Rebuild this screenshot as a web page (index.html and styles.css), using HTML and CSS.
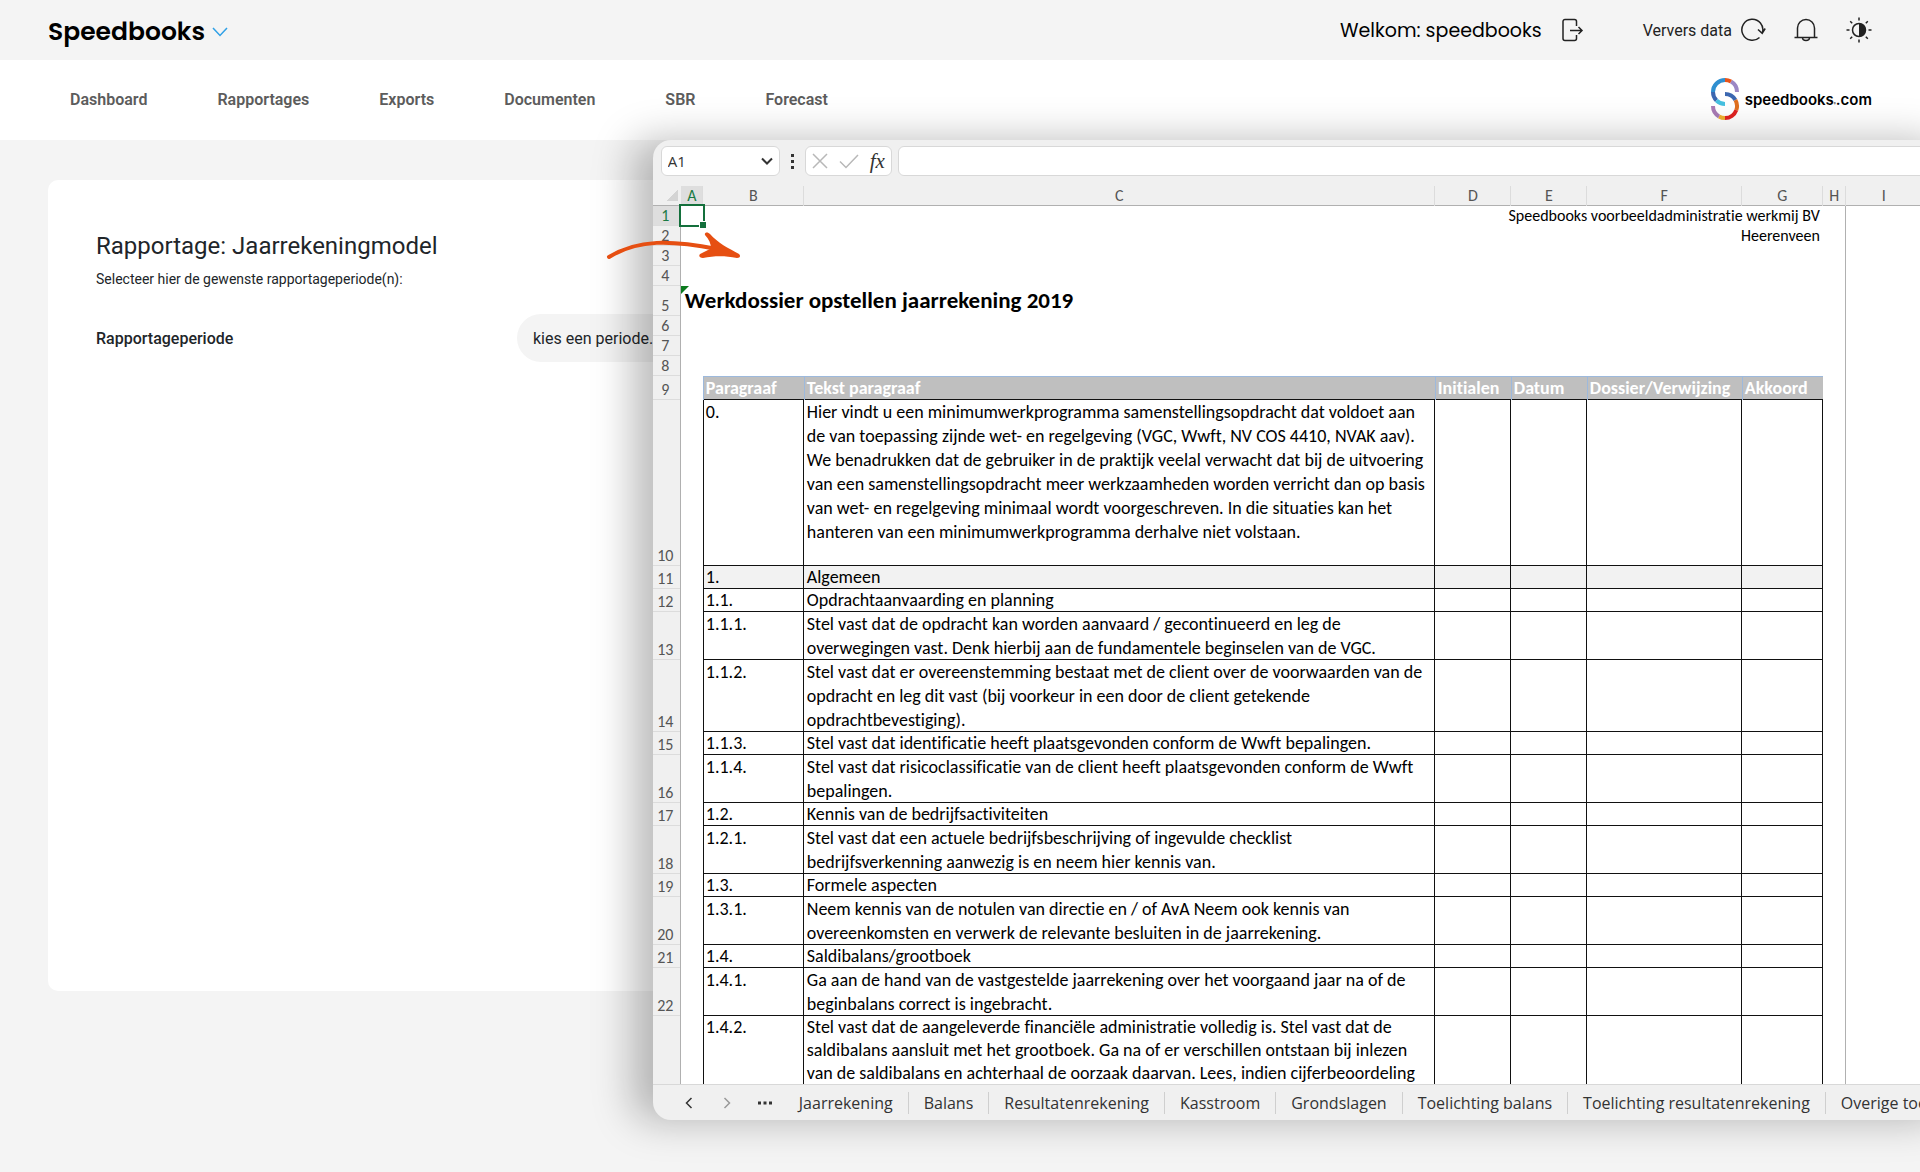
FILE: index.html
```html
<!DOCTYPE html>
<html lang="nl">
<head>
<meta charset="utf-8">
<meta name="viewport" content="width=device-width, initial-scale=1">
<title>Speedbooks - Rapportage</title>
<link rel="stylesheet" href="styles.css">
</head>
<body>
<div class="page">
  <header class="topbar">
    <button class="brand" type="button">Speedbooks
      <svg class="brand-chevron" viewBox="0 0 16 10" aria-hidden="true"><path d="M1 1l7 7.500 7-7.500"/></svg>
    </button>
    <div class="topbar-right">
      <span class="welcome">Welkom: speedbooks</span>
      <button class="icon-button logout" type="button" aria-label="Uitloggen">
        <svg width="22" height="24" viewBox="0 0 22 24"><path d="M14.500 8V3.500a2 2 0 0 0-2-2h-9.500a2 2 0 0 0-2 2v17a2 2 0 0 0 2 2h9.500a2 2 0 0 0 2-2V17M8 12.500h12M16.500 9l3.500 3.500-3.500 3.500"/></svg>
      </button>
      <button class="refresh" type="button">Ververs data
        <svg width="26" height="26" viewBox="0 0 26 26"><path d="M19.500 20.500A10.500 10.500 0 1 1 22.500 15.500M18 12.500l4.200 3.800 3-4.800"/></svg>
      </button>
      <button class="icon-button" type="button" aria-label="Meldingen">
        <svg width="26" height="26" viewBox="0 0 26 26"><path d="M1.500 20.500h23M4.500 20.500v-9.500a8.500 8.500 0 0 1 17 0v9.500M9.500 20.500a3.500 3 0 0 0 7 0"/></svg>
      </button>
      <button class="icon-button" type="button" aria-label="Thema wisselen">
        <svg width="26" height="26" viewBox="0 0 26 26"><circle cx="13" cy="13" r="6.500"/><path class="solid" d="M13 6.500a6.500 6.500 0 0 1 0 13z"/><path d="M13 .5v3M13 22.500v3M.5 13h3M22.500 13h3M4.200 4.200l2 2M19.800 19.800l2 2M21.800 4.200l-2 2M6.200 19.800l-2 2"/></svg>
      </button>
    </div>
  </header>

  <nav class="mainnav" aria-label="Hoofdmenu">
    <ul class="menu">
      <li><a href="#">Dashboard</a></li>
      <li><a href="#">Rapportages</a></li>
      <li><a href="#">Exports</a></li>
      <li><a href="#">Documenten</a></li>
      <li><a href="#">SBR</a></li>
      <li><a href="#">Forecast</a></li>
    </ul>
    <a class="logo" href="#">
      <svg width="30" height="44" viewBox="0 0 30 44" aria-hidden="true">
        <path stroke="#9b87c4" d="M27 15A12 12 0 0 0 21 4.600"/>
        <path stroke="#e8541a" d="M21 4.600A12 12 0 0 0 15 3"/>
        <path stroke="#2f8fd0" d="M15 3A12 12 0 0 0 3 15"/>
        <path stroke="#3b67b0" d="M3 15A12 12 0 0 0 6.500 23.500"/>
        <path stroke="#45c0e0" d="M6.500 23.500A12 12 0 0 0 15 27"/>
        <path stroke="#3b67b0" d="M15 17A12 12 0 0 1 25.400 23"/>
        <path stroke="#e07020" d="M25.400 23A12 12 0 0 1 26.300 33.100"/>
        <path stroke="#e02222" d="M26.300 33.100A12 12 0 0 1 15 41"/>
        <path stroke="#f0b030" d="M15 41A12 12 0 0 1 9 39.400"/>
        <path stroke="#a87bb5" d="M9 39.400A12 12 0 0 1 3 29"/>
      </svg>
      <span>speedbooks<small>®</small>.com</span>
    </a>
  </nav>

  <main class="card">
    <h1>Rapportage: Jaarrekeningmodel</h1>
    <p class="hint">Selecteer hier de gewenste rapportageperiode(n):</p>
    <div class="field">
      <label for="periode">Rapportageperiode</label>
      <select id="periode"><option>kies een periode...</option></select>
    </div>
  </main>

  <section class="workbook" aria-label="Werkdossier">
    <div class="formula-bar">
      <div class="name-box">
        <input type="text" value="A1" aria-label="Naamvak">
        <svg width="12" height="8" viewBox="0 0 12 8" aria-hidden="true"><path d="M1 1.500l5 5 5-5"/></svg>
      </div>
      <span class="dots" aria-hidden="true"><i></i><i></i><i></i></span>
      <div class="formula-tools">
        <button type="button" aria-label="Annuleren"><svg width="16" height="16" viewBox="0 0 16 16"><path d="M1 1l14 14M15 1L1 15"/></svg></button>
        <button type="button" aria-label="Invoeren"><svg width="20" height="16" viewBox="0 0 20 16"><path d="M1 8.500l6 6L19 2"/></svg></button>
        <button class="fx" type="button">fx</button>
      </div>
      <input class="formula" type="text" aria-label="Formule">
    </div>

    <div class="grid-view">
      <table class="grid">
        <colgroup><col class="c-row"><col class="c-a"><col class="c-b"><col class="c-c"><col class="c-d"><col class="c-d"><col class="c-f"><col class="c-g"><col class="c-h"><col class="c-d"><col></colgroup>
        <thead>
          <tr><th class="corner"></th><th class="active">A</th><th>B</th><th>C</th><th>D</th><th>E</th><th>F</th><th>G</th><th>H</th><th>I</th><th></th></tr>
        </thead>
        <tbody>
          <tr><th class="active">1</th><td class="selected"></td><td></td><td></td><td class="right" colspan="4">Speedbooks voorbeeldadministratie werkmij BV</td><td class="edge"></td><td></td></tr>
          <tr><th>2</th><td></td><td></td><td></td><td class="right" colspan="4">Heerenveen</td><td class="edge"></td><td></td></tr>
          <tr><th>3</th><td colspan="7"></td><td class="edge"></td><td></td></tr>
          <tr><th>4</th><td colspan="7"></td><td class="edge"></td><td></td></tr>
          <tr class="title-row"><th>5</th><td class="flagged" colspan="7">Werkdossier opstellen jaarrekening 2019</td><td class="edge"></td><td></td></tr>
          <tr><th>6</th><td colspan="7"></td><td class="edge"></td><td></td></tr>
          <tr><th>7</th><td colspan="7"></td><td class="edge"></td><td></td></tr>
          <tr><th>8</th><td colspan="7"></td><td class="edge"></td><td></td></tr>
          <tr class="head"><th>9</th><td></td><td>Paragraaf</td><td>Tekst paragraaf</td><td>Initialen</td><td>Datum</td><td>Dossier/Verwijzing</td><td>Akkoord</td><td class="edge"></td><td></td></tr>
          <tr class="item intro"><th>10</th><td></td><td>0.</td><td>Hier vindt u een minimumwerkprogramma samenstellingsopdracht dat voldoet aan<br>de van toepassing zijnde wet- en regelgeving (VGC, Wwft, NV COS 4410, NVAK aav).<br>We benadrukken dat de gebruiker in de praktijk veelal verwacht dat bij de uitvoering<br>van een samenstellingsopdracht meer werkzaamheden worden verricht dan op basis<br>van wet- en regelgeving minimaal wordt voorgeschreven. In die situaties kan het<br>hanteren van een minimumwerkprogramma derhalve niet volstaan.</td><td></td><td></td><td></td><td></td><td class="edge"></td><td></td></tr>
          <tr class="item single shaded"><th>11</th><td></td><td>1.</td><td>Algemeen</td><td></td><td></td><td></td><td></td><td class="edge"></td><td></td></tr>
          <tr class="item single"><th>12</th><td></td><td>1.1.</td><td>Opdrachtaanvaarding en planning</td><td></td><td></td><td></td><td></td><td class="edge"></td><td></td></tr>
          <tr class="item"><th>13</th><td></td><td>1.1.1.</td><td>Stel vast dat de opdracht kan worden aanvaard / gecontinueerd en leg de<br>overwegingen vast. Denk hierbij aan de fundamentele beginselen van de VGC.</td><td></td><td></td><td></td><td></td><td class="edge"></td><td></td></tr>
          <tr class="item"><th>14</th><td></td><td>1.1.2.</td><td>Stel vast dat er overeenstemming bestaat met de client over de voorwaarden van de<br>opdracht en leg dit vast (bij voorkeur in een door de client getekende<br>opdrachtbevestiging).</td><td></td><td></td><td></td><td></td><td class="edge"></td><td></td></tr>
          <tr class="item single"><th>15</th><td></td><td>1.1.3.</td><td>Stel vast dat identificatie heeft plaatsgevonden conform de Wwft bepalingen.</td><td></td><td></td><td></td><td></td><td class="edge"></td><td></td></tr>
          <tr class="item"><th>16</th><td></td><td>1.1.4.</td><td>Stel vast dat risicoclassificatie van de client heeft plaatsgevonden conform de Wwft<br>bepalingen.</td><td></td><td></td><td></td><td></td><td class="edge"></td><td></td></tr>
          <tr class="item single"><th>17</th><td></td><td>1.2.</td><td>Kennis van de bedrijfsactiviteiten</td><td></td><td></td><td></td><td></td><td class="edge"></td><td></td></tr>
          <tr class="item"><th>18</th><td></td><td>1.2.1.</td><td>Stel vast dat een actuele bedrijfsbeschrijving of ingevulde checklist<br>bedrijfsverkenning aanwezig is en neem hier kennis van.</td><td></td><td></td><td></td><td></td><td class="edge"></td><td></td></tr>
          <tr class="item single"><th>19</th><td></td><td>1.3.</td><td>Formele aspecten</td><td></td><td></td><td></td><td></td><td class="edge"></td><td></td></tr>
          <tr class="item"><th>20</th><td></td><td>1.3.1.</td><td>Neem kennis van de notulen van directie en / of AvA Neem ook kennis van<br>overeenkomsten en verwerk de relevante besluiten in de jaarrekening.</td><td></td><td></td><td></td><td></td><td class="edge"></td><td></td></tr>
          <tr class="item single"><th>21</th><td></td><td>1.4.</td><td>Saldibalans/grootboek</td><td></td><td></td><td></td><td></td><td class="edge"></td><td></td></tr>
          <tr class="item"><th>22</th><td></td><td>1.4.1.</td><td>Ga aan de hand van de vastgestelde jaarrekening over het voorgaand jaar na of de<br>beginbalans correct is ingebracht.</td><td></td><td></td><td></td><td></td><td class="edge"></td><td></td></tr>
          <tr class="item last"><th></th><td></td><td>1.4.2.</td><td>Stel vast dat de aangeleverde financiële administratie volledig is. Stel vast dat de<br>saldibalans aansluit met het grootboek. Ga na of er verschillen ontstaan bij inlezen<br>van de saldibalans en achterhaal de oorzaak daarvan. Lees, indien cijferbeoordeling</td><td></td><td></td><td></td><td></td><td class="edge"></td><td></td></tr>
        </tbody>
      </table>
    </div>

    <div class="sheet-tabs">
      <button class="step" type="button" aria-label="Vorige"><svg width="8" height="12" viewBox="0 0 8 12"><path d="M6.500 1L1.500 6l5 5"/></svg></button>
      <button class="step muted" type="button" aria-label="Volgende"><svg width="8" height="12" viewBox="0 0 8 12"><path d="M1.500 1l5 5-5 5"/></svg></button>
      <button class="step" type="button" aria-label="Alle bladen"><svg width="14" height="4" viewBox="0 0 14 4"><path class="solid" d="M0 .5h3v3H0zM5.500 .5h3v3h-3zM11 .5h3v3h-3z"/></svg></button>
      <button class="tab" type="button">Jaarrekening</button>
      <button class="tab" type="button">Balans</button>
      <button class="tab" type="button">Resultatenrekening</button>
      <button class="tab" type="button">Kasstroom</button>
      <button class="tab" type="button">Grondslagen</button>
      <button class="tab" type="button">Toelichting balans</button>
      <button class="tab" type="button">Toelichting resultatenrekening</button>
      <button class="tab" type="button">Overige toelichting</button>
    </div>
  </section>

  <svg class="arrow" width="140" height="32" viewBox="0 0 140 32" aria-hidden="true">
    <path class="shaft" d="M4 27C33 9 66 10 112 19"/>
    <path class="tip" d="M100 5C99 2 103 1.500 105 4C113 13 123 18 134 24C136 26 135 28 132 28C119 25.500 109 26 98 28C94 28 93 25 96 23.500L106 18.500C106 14 104 9 100 5Z"/>
  </svg>
</div>
</body>
</html>
```
FILE: styles.css
```css
* {
  box-sizing: border-box;
}

body {
  margin: 0;
  background: #f4f4f4;
  color: #212529;
  font-family: Roboto, sans-serif;
  font-size: 16px;
}

button,
input,
select {
  margin: 0;
  padding: 0;
  border: 0;
  background: none;
  color: inherit;
  font: inherit;
}

svg {
  display: block;
  flex: none;
  fill: none;
  stroke: currentColor;
}

svg .solid {
  fill: currentColor;
  stroke: none;
}

.page {
  position: relative;
  min-height: 100vh;
  overflow: hidden;
}

/* Top bar */

.topbar {
  display: flex;
  align-items: center;
  justify-content: space-between;
  height: 60px;
  padding: 0 48px;
}

.brand {
  display: flex;
  align-items: center;
  gap: 7px;
  padding-top: 3px;
  color: #000;
  font-family: Poppins, Inter, sans-serif;
  font-size: 25px;
  font-weight: 600;
}

.brand-chevron {
  width: 16px;
  height: 10px;
  color: #2fa0e6;
  stroke-width: 1.5;
}

.topbar-right {
  display: flex;
  align-items: center;
  gap: 27px;
  color: #222;
}

.welcome {
  margin-right: -7px;
  color: #000;
  font-family: Poppins, Inter, sans-serif;
  font-size: 19px;
}

.icon-button,
.refresh {
  stroke-width: 1.5;
}

.logout {
  margin-right: 32px;
}

.refresh {
  display: flex;
  align-items: center;
  gap: 8px;
}

/* Main navigation */

.mainnav {
  display: flex;
  align-items: center;
  justify-content: space-between;
  height: 80px;
  padding: 0 48px 2px 70px;
  background: #fff;
}

.menu {
  display: flex;
  gap: 70px;
  margin: 0;
  padding: 0;
  list-style: none;
}

.menu a {
  color: #5c5c5c;
  font-weight: 600;
  text-decoration: none;
}

.logo {
  display: flex;
  align-items: center;
  gap: 5px;
  color: #000;
  font-family: Inter, sans-serif;
  font-size: 15px;
  font-weight: 600;
  text-decoration: none;
}

.logo svg {
  stroke-width: 4;
}

.logo small {
  font-size: 3px;
}

/* Report card */

.card {
  min-height: 811px;
  margin: 40px 48px;
  padding: 48px;
  border-radius: 10px;
  background: #fff;
}

.card h1 {
  margin: 0;
  font-size: 24px;
  font-weight: 400;
  line-height: 36px;
}

.hint {
  margin: 5px 0 25px;
  font-size: 14px;
  line-height: 20px;
}

.field {
  display: grid;
  grid-template-columns: 421px minmax(0, 400px);
  align-items: center;
}

.field label {
  font-weight: 500;
}

.field select {
  height: 48px;
  padding: 0 16px;
  border-radius: 24px;
  background: #f4f4f4;
  appearance: none;
}

/* Workbook window, floating over the report card */

.workbook {
  position: absolute;
  top: 140px;
  right: -40px;
  left: 34%;
  overflow: hidden;
  border-radius: 18px;
  background: #f0f0f0;
  box-shadow: -20px 0 40px rgba(0, 0, 0, 0.27);
  color: #000;
}

.formula-bar {
  display: flex;
  height: 46px;
  padding: 6px 0 10px 8px;
}

.name-box,
.formula-tools,
.formula {
  border: 1px solid #d8d8d8;
  border-radius: 6px;
  background: #fff;
}

.name-box {
  display: flex;
  align-items: center;
  width: 119px;
  padding: 0 6px;
  color: #333;
  font-family: "Open Sans", sans-serif;
  font-size: 15px;
  stroke-width: 2;
}

.name-box input {
  flex: 1;
  min-width: 0;
}

.dots {
  display: flex;
  flex-direction: column;
  align-items: center;
  justify-content: center;
  gap: 3px;
  width: 25px;
}

.dots i {
  width: 3px;
  height: 3px;
  background: #333;
}

.formula-tools {
  display: flex;
  align-items: center;
  justify-content: space-between;
  width: 87px;
  margin-right: 6px;
  padding: 0 6px;
  color: #b8b8b8;
  stroke-width: 1.5;
}

.formula-tools .fx {
  color: #333;
  font-family: "Liberation Serif", serif;
  font-size: 21px;
  font-style: italic;
  line-height: 24px;
}

.formula {
  flex: 1;
  min-width: 0;
}

/* Cell grid */

.grid-view {
  height: 899px;
  overflow: hidden;
  border-bottom: 1px solid #d8d8d8;
  background: #fff;
}

.grid {
  width: 100%;
  border-spacing: 0;
  table-layout: fixed;
  font-family: Calibri, Carlito, Lato, sans-serif;
  font-size: 18px;
  font-variant-ligatures: none;
  line-height: 24px;
  white-space: nowrap;
}

.c-row { width: 28px; }
.c-a { width: 22px; }
.c-b { width: 101px; }
.c-c { width: 631px; }
.c-d { width: 76px; }
.c-f { width: 155px; }
.c-g { width: 81px; }
.c-h { width: 23px; }

.grid th,
.grid td {
  height: 20px;
  padding: 0 3px;
  text-align: left;
  vertical-align: top;
}

.grid th {
  padding: 0;
  background: #f0f0f0;
  color: #555;
  font-size: 16px;
  font-weight: 400;
  line-height: 20px;
  text-align: center;
  vertical-align: bottom;
}

.grid thead th {
  box-shadow: inset -1px 0 #dcdcdc, inset 0 -1px #b0b0b0;
}

.grid tbody th {
  padding-right: 3px;
  box-shadow: inset -1px 0 #b0b0b0, inset 0 -1px #dcdcdc;
}

.grid th.active {
  background: #dedede;
  color: #1a7a43;
}

.grid thead .corner {
  background: linear-gradient(135deg, transparent 50%, #d4d4d4 50%) 14px 4px / 11px 11px no-repeat #f0f0f0;
  box-shadow: inset 0 -1px #b0b0b0;
}

.grid .right {
  font-size: 16px;
  line-height: 20px;
  text-align: right;
}

.grid .edge {
  box-shadow: inset -1px 0 #b0b0b0;
}

.selected,
.flagged {
  position: relative;
}

.selected::before {
  content: "";
  position: absolute;
  inset: -2px -2px -1px -2px;
  border: 2px solid #14703c;
}

.selected::after {
  content: "";
  position: absolute;
  right: -3px;
  bottom: -2px;
  width: 6px;
  height: 6px;
  border: 1px solid #fff;
  border-width: 1px 0 0 1px;
  background: #14703c;
}

.flagged::before {
  content: "";
  position: absolute;
  top: 0;
  left: 0;
  border: 4px solid transparent;
  border-top-color: #0b7a1e;
  border-left-color: #0b7a1e;
}

.title-row td {
  height: 30px;
  padding-left: 4px;
  font-size: 23px;
  font-weight: 700;
  line-height: 29px;
}

.head td {
  height: 24px;
  font-weight: 700;
}

.head td:nth-child(n+3):nth-child(-n+8) {
  background: #bfbfbf;
  box-shadow: inset 1px 1px #9db9dc, inset 0 -1px #111;
  color: #fff;
}

.item td:nth-child(n+3):nth-child(-n+8) {
  box-shadow: inset -1px -1px #111;
}

.item td:nth-child(n+3):nth-child(-n+3) {
  box-shadow: inset -1px -1px #111, inset 1px 0 #111;
}

.item.intro td {
  height: 166px;
}

.item.single td {
  height: 23px;
  line-height: 23px;
}

.item.last td {
  height: 72px;
  line-height: 23px;
}

.item.shaded td:nth-child(n+3):nth-child(-n+8) {
  background: #f2f2f2;
}

/* Sheet tabs */

.sheet-tabs {
  display: flex;
  align-items: center;
  height: 35px;
  padding-left: 17px;
  overflow: hidden;
  color: #333;
  font-family: "Open Sans", sans-serif;
  font-size: 16px;
}

.step {
  display: flex;
  flex: none;
  justify-content: center;
  width: 38px;
  stroke-width: 1.5;
}

.muted {
  color: #999;
}

.tab {
  flex: none;
  height: 22px;
  padding: 0 15px;
  border-right: 1px solid #cfcfcf;
  line-height: 22px;
  white-space: nowrap;
}

/* Arrow pointing from the report to the workbook */

.arrow {
  position: absolute;
  top: 230px;
  left: 31.5%;
  color: #e64f12;
  pointer-events: none;
}

.arrow .shaft {
  stroke-width: 4;
  stroke-linecap: round;
}

.arrow .tip {
  fill: currentColor;
  stroke: none;
}
```
